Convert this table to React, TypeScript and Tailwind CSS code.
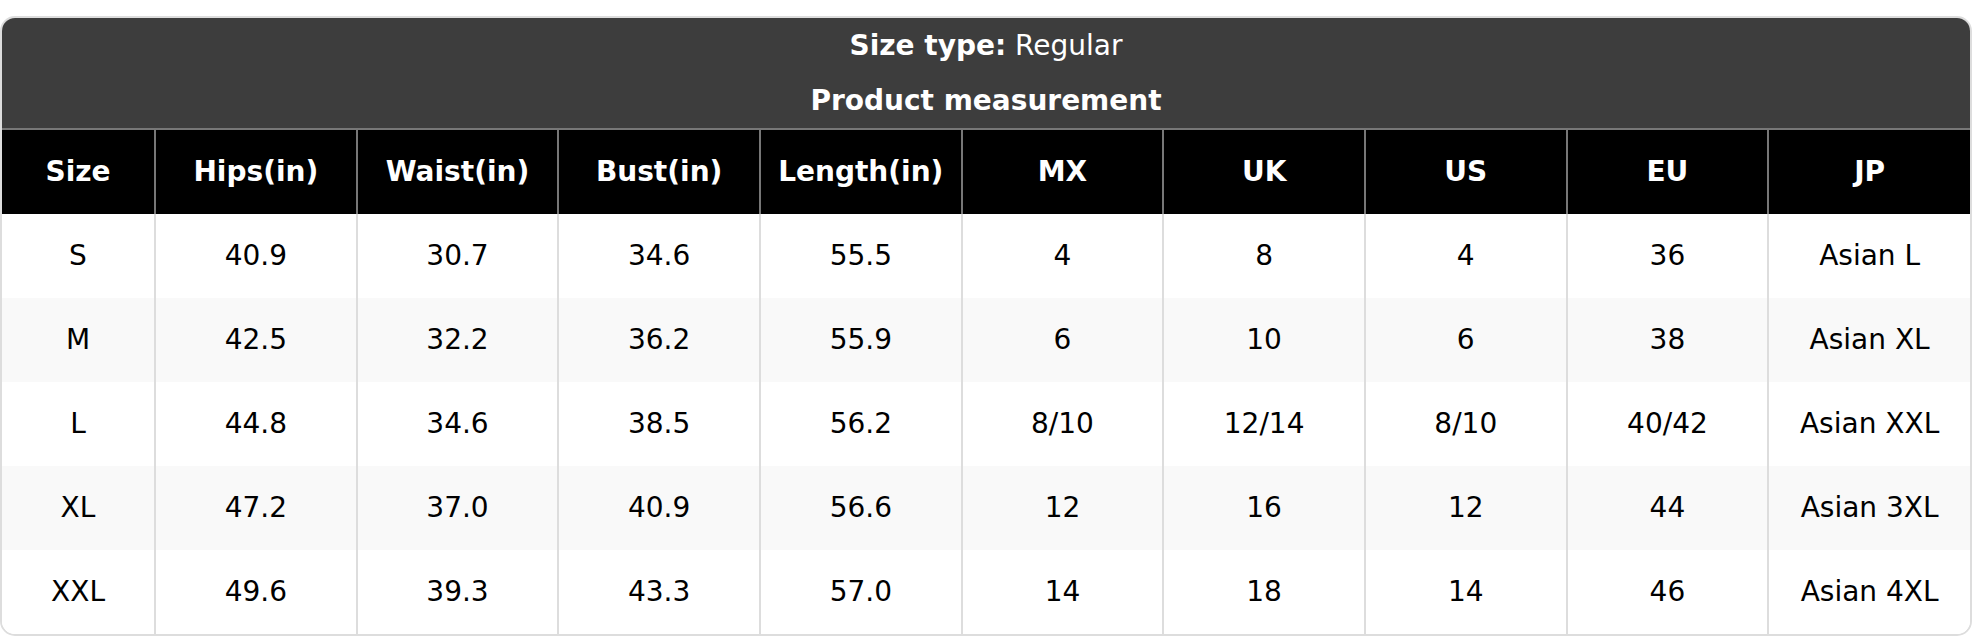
import * as React from "react"

const headers = ["Size", "Hips(in)", "Waist(in)", "Bust(in)", "Length(in)", "MX", "UK", "US", "EU", "JP"]

const rows = [
  ["S", "40.9", "30.7", "34.6", "55.5", "4", "8", "4", "36", "Asian L"],
  ["M", "42.5", "32.2", "36.2", "55.9", "6", "10", "6", "38", "Asian XL"],
  ["L", "44.8", "34.6", "38.5", "56.2", "8/10", "12/14", "8/10", "40/42", "Asian XXL"],
  ["XL", "47.2", "37.0", "40.9", "56.6", "12", "16", "12", "44", "Asian 3XL"],
  ["XXL", "49.6", "39.3", "43.3", "57.0", "14", "18", "14", "46", "Asian 4XL"],
]

export default function App() {
  return (
    <div className="w-[1972px] pt-[16px] bg-white" style={{ fontFamily: '"DejaVu Sans", sans-serif' }}>
      <div className="rounded-[15px] border-2 border-[#dddddd] overflow-hidden">
        {/* Title block */}
        <div className="bg-[#3d3d3d] text-white text-center text-[28px]">
          <div className="h-[55px] leading-[55px]">
            <span className="font-bold">Size type:</span> Regular
          </div>
          <div className="h-[55px] leading-[55px] font-bold">Product measurement</div>
        </div>

        <table className="w-full table-fixed border-collapse text-[28px] text-center">
          <colgroup>
            <col className="w-[153px]" />
            {headers.slice(1).map((h) => (
              <col key={h} />
            ))}
          </colgroup>
          <thead>
            <tr className="bg-black text-white border-t-2 border-[#777777]">
              {headers.map((h, i) => (
                <th
                  key={h}
                  className={
                    "h-[85px] font-bold p-0 " + (i > 0 ? "border-l-2 border-[#777777]" : "")
                  }
                >
                  {h}
                </th>
              ))}
            </tr>
          </thead>
          <tbody>
            {rows.map((r, ri) => (
              <tr key={r[0]} className={ri % 2 === 1 ? "bg-[#f9f9f9]" : "bg-white"}>
                {r.map((c, ci) => (
                  <td
                    key={ci}
                    className={
                      "h-[84px] p-0 text-black " + (ci > 0 ? "border-l-2 border-[#dddddd]" : "")
                    }
                  >
                    {c}
                  </td>
                ))}
              </tr>
            ))}
          </tbody>
        </table>
      </div>
    </div>
  )
}
